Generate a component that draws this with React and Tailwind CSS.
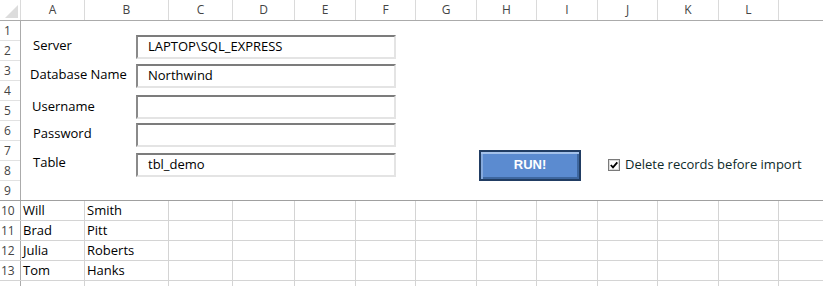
import React from 'react';

const COLS = [
    { name: 'A', w: 'w-[64px]' },
    { name: 'B', w: 'w-[84px]' },
    { name: 'C', w: 'w-[64px]' },
    { name: 'D', w: 'w-[62px]' },
    { name: 'E', w: 'w-[61px]' },
    { name: 'F', w: 'w-[60px]' },
    { name: 'G', w: 'w-[61px]' },
    { name: 'H', w: 'w-[60px]' },
    { name: 'I', w: 'w-[61px]' },
    { name: 'J', w: 'w-[60px]' },
    { name: 'K', w: 'w-[61px]' },
    { name: 'L', w: 'w-[60px]' },
];

const PEOPLE = [
    ['10', 'Will', 'Smith'],
    ['11', 'Brad', 'Pitt'],
    ['12', 'Julia', 'Roberts'],
    ['13', 'Tom', 'Hanks'],
];

// one form line: label on the left, sunken text box next to it
function Field({ label, value, labelClass, rowClass, children }) {
    return (
        <div className={`flex items-center h-[24px] ${rowClass}`}>
            <div className={`w-[115px] shrink-0 text-[13px] text-black ${labelClass}`}>{label}</div>
            <div className="w-[260px] h-[24px] shrink-0 border-2 border-t-[#7c7c7c] border-l-[#8a8a8a] border-r-[#e4e4e4] border-b-[#e4e4e4] bg-white flex items-center pl-[10px] text-[13px] text-black">
                {value}
            </div>
            {children}
        </div>
    );
}

export default function App() {
    return (
        <div className="w-[823px] h-[286px] overflow-hidden bg-white font-['Open_Sans',sans-serif] select-none">
            {/* column header */}
            <div className="flex h-[21px] border-b border-[#ababab]">
                <div className="w-[21px] shrink-0 border-r border-[#dadada] flex items-end justify-end pr-[2px] pb-[2px]">
                    <svg width="13" height="13" viewBox="0 0 13 13">
                        <polygon points="13,0 13,13 0,13" fill="#dcdcdc" />
                    </svg>
                </div>
                {COLS.map(c => (
                    <div key={c.name} className={`${c.w} shrink-0 border-r border-[#dadada] flex items-center justify-center text-[12px] text-[#444]`}>
                        {c.name}
                    </div>
                ))}
                <div className="flex-1" />
            </div>

            {/* frozen top pane: rows 1-9 with the connection form */}
            <div className="flex h-[180px] border-b border-[#a0a0a0]">
                <div className="w-[21px] shrink-0 border-r border-[#ababab] flex flex-col">
                    {[1, 2, 3, 4, 5, 6, 7, 8, 9].map(n => (
                        <div key={n} className="h-[20px] last:h-[19px] last:border-b-0 border-b border-[#e2e2e2] flex items-center pl-[4px] text-[12px] text-[#444]">
                            {n}
                        </div>
                    ))}
                </div>
                <div className="flex-1 flex flex-col">
                    <Field label="Server" value="LAPTOP\SQL_EXPRESS" labelClass="pl-[12px] pb-[2px]" rowClass="mt-[14px]" />
                    <Field label="Database Name" value="Northwind" labelClass="pl-[9px] pb-[2px]" rowClass="mt-[5px]" />
                    <Field label="Username" value="" labelClass="pl-[11px]" rowClass="mt-[7px]" />
                    <Field label="Password" value="" labelClass="pl-[12px] pb-[3px]" rowClass="mt-[4px]" />
                    <Field label="Table" value="tbl_demo" labelClass="pl-[12px] pb-[5px]" rowClass="mt-[6px]">
                        <button className="ml-[83px] w-[102px] h-[31px] shrink-0 border-2 border-[#213d63] bg-[#5b8bd0] shadow-[inset_0_2px_0_#a3c1ea,inset_2px_0_0_#86aadd,inset_0_-2px_0_#3e679f,inset_-2px_0_0_#3e679f] text-white font-bold text-[13px] flex items-center justify-center font-['Liberation_Sans',sans-serif]">
                            RUN!
                        </button>
                        <div className="ml-[27px] flex items-center gap-[5px]">
                            <svg width="12" height="12" viewBox="0 0 12 12">
                                <rect x="0.5" y="0.5" width="11" height="11" fill="#fff" stroke="#7a7a7a" />
                                <rect x="1.5" y="1.5" width="9" height="9" fill="none" stroke="#dcdcdc" />
                                <path d="M2.8 6 L5 8.4 L9.3 3.4" fill="none" stroke="#000" strokeWidth="1.8" />
                            </svg>
                            <span className="text-[13px] text-[#0e2a2a]">Delete records before import</span>
                        </div>
                    </Field>
                </div>
            </div>

            {/* data rows */}
            {PEOPLE.map(([n, first, last]) => (
                <div key={n} className="flex h-[20px] border-b border-[#d4d4d4]">
                    <div className="w-[21px] shrink-0 border-r border-[#ababab] flex items-center pl-[1px] text-[12px] text-[#444]">{n}</div>
                    {COLS.map((c, i) => (
                        <div key={c.name} className={`${c.w} shrink-0 border-r border-[#d4d4d4] flex items-center pl-[2px] text-[13px] text-black`}>
                            {i === 0 ? first : i === 1 ? last : ''}
                        </div>
                    ))}
                    <div className="flex-1" />
                </div>
            ))}
            <div className="flex h-[20px]">
                <div className="w-[21px] shrink-0 border-r border-[#ababab]" />
                {COLS.map(c => (
                    <div key={c.name} className={`${c.w} shrink-0 border-r border-[#d4d4d4]`} />
                ))}
            </div>
        </div>
    );
}
